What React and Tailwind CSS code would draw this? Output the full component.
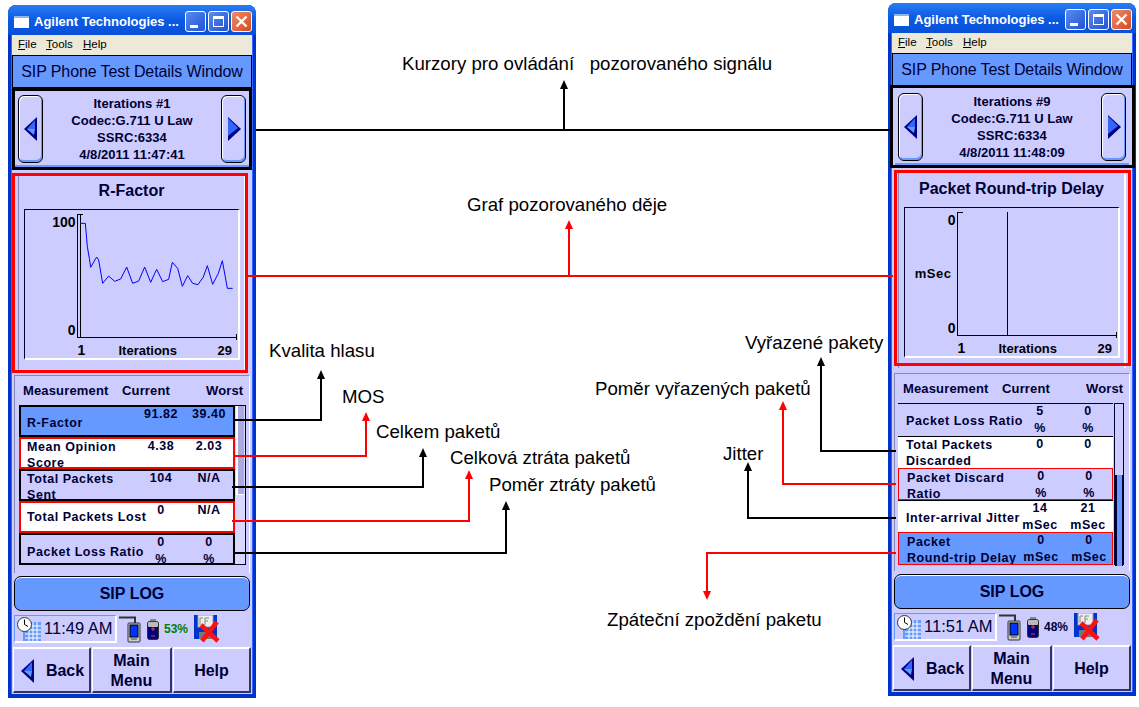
import React from 'react';

const curve = [[30,55],[46,55],[52,125],[58,160],[62,187],[80,156],[86,165],[98,235],[116,213],[134,229],[152,222],[170,186],[188,235],[206,228],[224,186],[242,232],[260,193],[278,230],[296,223],[307,172],[323,190],[337,244],[353,212],[368,235],[384,239],[400,216],[412,182],[428,238],[445,205],[457,167],[472,250],[488,250]]
  .map(([x, y]) => `${x / 3 - 7},${y / 3 - 9}`)
  .join(' ');

const leftRows = [
  { label: ['R-Factor'], cur: ['91.82'], worst: ['39.40'], cls: 'h-[32px] bg-[#6699ff] border-2 border-black', offset: 'pt-[4px]' },
  { label: ['Mean Opinion', 'Score'], cur: ['4.38'], worst: ['2.03'], cls: 'h-[32px] bg-white border-2 border-[#ff0000]' },
  { label: ['Total Packets', 'Sent'], cur: ['104'], worst: ['N/A'], cls: 'h-[32px] bg-[#ccccff] border-2 border-black' },
  { label: ['Total Packets Lost'], cur: ['0'], worst: ['N/A'], cls: 'h-[32px] bg-white border-2 border-[#ff0000]' },
  { label: ['Packet Loss Ratio'], cur: ['0', '%'], worst: ['0', '%'], cls: 'h-[32px] bg-[#ccccff] border-2 border-black' },
];

const rightRows = [
  { label: ['Packet Loss Ratio'], cur: ['5', '%'], worst: ['0', '%'], cls: 'h-[33px] bg-[#ccccff] border-t border-[#000033]' },
  { label: ['Total Packets', 'Discarded'], cur: ['0'], worst: ['0'], cls: 'h-[32px] bg-white border-t border-black' },
  { label: ['Packet Discard', 'Ratio'], cur: ['0', '%'], worst: ['0', '%'], cls: 'h-[32px] bg-[#ccccff] border border-[#ff0000]' },
  { label: ['Inter-arrival Jitter'], cur: ['14', 'mSec'], worst: ['21', 'mSec'], cls: 'h-[32px] bg-white border-t border-black' },
  { label: ['Packet', 'Round-trip Delay'], cur: ['0', 'mSec'], worst: ['0', 'mSec'], cls: 'h-[33px] bg-[#6699ff] border border-[#ff0000]' },
];

function TitleBar() {
  return (
    <div className="h-[30px] shrink-0 flex items-center pt-[3px] pl-[6px] pr-[4px] rounded-t-[8px] bg-linear-to-b from-[#2a7df2] via-[#0a5ae4] to-[#0a50d8]">
      <svg width="15" height="12" viewBox="0 0 15 12" className="shrink-0">
        <rect width="15" height="12" fill="#fff" />
        <rect width="15" height="2" fill="#8fb4ee" />
      </svg>
      <span className="ml-[5px] text-white font-bold text-[13px] whitespace-nowrap">Agilent Technologies ...</span>
      <div className="ml-auto flex gap-[2px]">
        <div className="w-[21px] h-[21px] rounded-[3px] border border-white bg-linear-to-br from-[#5a8cf0] to-[#2350d4] flex items-end pl-[4px] pb-[3px]">
          <div className="w-[8px] h-[3px] bg-white" />
        </div>
        <div className="w-[21px] h-[21px] rounded-[3px] border border-white bg-linear-to-br from-[#5a8cf0] to-[#2350d4] flex items-center justify-center">
          <div className="w-[11px] h-[11px] border border-white border-t-[3px]" />
        </div>
        <div className="w-[21px] h-[21px] rounded-[3px] border border-white bg-linear-to-br from-[#ee8a68] to-[#d4481c] flex items-center justify-center">
          <svg width="13" height="13" viewBox="0 0 13 13">
            <path d="M1.5 1.5 L11.5 11.5 M11.5 1.5 L1.5 11.5" stroke="#fff" strokeWidth="2.4" />
          </svg>
        </div>
      </div>
    </div>
  );
}

function MenuBar() {
  return (
    <div className="h-[20px] shrink-0 bg-[#ece9d8] flex items-center pl-[6px] text-[11.5px] text-black">
      <span className="w-[28px]"><u>F</u>ile</span>
      <span className="w-[37px]"><u>T</u>ools</span>
      <span><u>H</u>elp</span>
    </div>
  );
}

function Arrow({ dir }) {
  return (
    <svg width="14" height="24" viewBox="0 0 14 24" className="shrink-0">
      {dir === 'left' ? (
        <>
          <polygon points="13,0 0,12 13,24" fill="#000080" />
          <polygon points="11,3 3,12 11,12" fill="#3366ff" />
          <polygon points="11,12 3,12 10,18" fill="#6699ff" />
        </>
      ) : (
        <>
          <polygon points="1,0 14,12 1,24" fill="#000080" />
          <polygon points="1,1 11,11 1,19" fill="#3366ff" />
        </>
      )}
    </svg>
  );
}

function NavButton({ dir }) {
  return (
    <div className="w-[25px] h-[68px] shrink-0 rounded-[6px] border border-black bg-[#ccccff] shadow-[inset_1px_1px_0_#fff,inset_-1px_-2px_0_#6699ff] flex items-center justify-center">
      <Arrow dir={dir} />
    </div>
  );
}

function NavPanel({ lines }) {
  return (
    <div className="mt-[3px] mx-[3px] h-[76px] shrink-0 flex items-center pt-[1px] px-[3px] border-b-2 border-[#6699ff]">
      <NavButton dir="left" />
      <div className="flex-1 mt-[1px] text-center font-bold text-[13px] leading-[17px] tracking-[0.05px] text-[#000033]">
        {lines.map((l) => <div key={l}>{l}</div>)}
      </div>
      <NavButton dir="right" />
    </div>
  );
}

function Plot({ kind }) {
  return (
    <svg width="160" height="126" viewBox="0 0 160 126" className="shrink-0">
      <path d="M0 .5 H6 M159.5 120 V126 M0 123.5 H160" stroke="#000" fill="none" />
      <path d="M.5 0 V124" stroke="#000" fill="none" />
      {kind === 'curve' ? (
        <>
          <path d="M3.5 0 V124" stroke="#000" fill="none" />
          <polyline points={curve} fill="none" stroke="#0000ff" strokeWidth="1" />
        </>
      ) : (
        <path d="M50.5 0 V124" stroke="#000" fill="none" />
      )}
    </svg>
  );
}

function ChartPanel({ title, top, mid, kind }) {
  return (
    <div className="mt-[7px] mx-[6px] h-[196px] shrink-0 flex flex-col items-center border-l border-t border-[#8888bb] border-r-2 border-r-white">
      <div className="h-[34px] pb-[2px] w-full flex items-center justify-center font-bold text-[16px] text-[#000033]">{title}</div>
      <div className="w-[216px] h-[151px] border-t border-l border-[#000033] border-r-2 border-r-white border-b-2 border-b-white flex flex-col">
        <div className="flex pt-[4px]">
          <div className="w-[52px] h-[124px] pr-[1px] flex flex-col items-end justify-between font-bold text-[14px] leading-[16px]">
            <span>{top}</span>
            {mid && <span className="text-[13px] tracking-[0.5px] pr-[4px]">{mid}</span>}
            <span>0</span>
          </div>
          <Plot kind={kind} />
        </div>
        <div className="flex-1 flex items-center font-bold text-[13px]">
          <span className="ml-[53px] w-[41px] text-[14px]">1</span>
          <span className="w-[99px]">Iterations</span>
          <span>29</span>
        </div>
      </div>
    </div>
  );
}

function Row({ row, cols, pad }) {
  return (
    <div className={`shrink-0 grid font-bold text-[12.5px] leading-[16px] tracking-[0.55px] text-[#000033] overflow-hidden ${cols} ${row.cls}`}>
      <div className={`flex flex-col justify-center whitespace-nowrap ${pad} ${row.offset || ''}`}>
        {row.label.map((l) => <div key={l}>{l}</div>)}
      </div>
      <div className="text-center -mt-[1px] leading-[17px]">{row.cur.map((v) => <div key={v}>{v}</div>)}</div>
      <div className="text-center -mt-[1px] leading-[17px]">{row.worst.map((v) => <div key={v}>{v}</div>)}</div>
    </div>
  );
}

function ListPanel({ rows, side }) {
  const isLeft = side === 'left';
  return (
    <div className="mt-[5px] mx-[2px] h-[198px] shrink-0 flex flex-col border-t border-l border-[#8888bb] border-r border-r-white">
      <div className="h-[29px] shrink-0 flex items-center font-bold text-[13px] tracking-[0.15px] text-[#000033]">
        <span className="ml-[8px] w-[99px]">Measurement</span>
        <span className="w-[84px]">Current</span>
        <span>Worst</span>
      </div>
      <div className={`flex ${isLeft ? 'pl-[4px]' : 'pl-[3px]'}`}>
        <div className={`flex flex-col ${isLeft ? 'w-[216px]' : 'w-[215px]'}`}>
          {rows.map((r) => (
            <Row
              key={r.label.join()}
              row={r}
              cols={isLeft ? 'grid-cols-[116px_48px_48px]' : 'grid-cols-[118px_48px_48px]'}
              pad={isLeft ? 'pl-[6px]' : 'pl-[8px]'}
            />
          ))}
        </div>
        {isLeft ? (
          <div className="w-[11px] h-[160px] border-t border-r border-[#000033] bg-[#d8d8ff] border-b">
            <div className="h-[89px] mx-[1px] border-l-2 border-white bg-[#aaaadd] border-b border-[#000033]" />
          </div>
        ) : (
          <div className="w-[10px] ml-[1px] h-[162px] border-t border-x border-[#000033] bg-[#ccccff]">
            <div className="h-[71px]" />
            <div className="h-[91px] border-l-2 border-[#000033] bg-[#6699ff] border-r" />
          </div>
        )}
      </div>
    </div>
  );
}

function Clock() {
  return (
    <svg width="24" height="24" viewBox="0 0 24 24" className="shrink-0">
      <rect x="6" y="5" width="18" height="19" fill="#6699ff" />
      <path d="M8 9 H24 M8 13 H24 M8 17 H24 M8 21 H24 M12 5 V24 M16 5 V24 M20 5 V24" stroke="#fff" />
      <circle cx="7.5" cy="7.5" r="7" fill="#fff" stroke="#333" />
      <path d="M7.5 7.5 V2.5 M7.5 7.5 L11 9.5" stroke="#000" />
    </svg>
  );
}

function Handheld() {
  return (
    <svg width="22" height="27" viewBox="0 0 22 27" className="shrink-0">
      <path d="M0 1.5 H16 V7" stroke="#333" strokeWidth="2" fill="none" />
      <rect x="9" y="7" width="12" height="19" rx="1" fill="#cccccc" stroke="#333" />
      <rect x="11" y="9" width="8" height="12" fill="#0033ff" stroke="#000" />
      <rect x="12" y="22" width="6" height="2" fill="#888" />
    </svg>
  );
}

function Battery() {
  return (
    <svg width="12" height="21" viewBox="0 0 12 21" className="shrink-0">
      <rect x="3" y="0" width="6" height="3" fill="#888" />
      <rect x="0.5" y="2.5" width="11" height="18" rx="2" fill="#000080" stroke="#333" />
      <rect x="1" y="3" width="10" height="5" rx="1" fill="#bbb" />
      <path d="M4 10 H8 M6 8 V12" stroke="#ff3333" />
      <path d="M4 17 H8" stroke="#ff3333" />
    </svg>
  );
}

function Disk() {
  return (
    <svg width="26" height="28" viewBox="0 0 26 28" className="shrink-0">
      <rect x="0" y="0" width="23" height="24" fill="#0033cc" />
      <rect x="4" y="0" width="15" height="12" fill="#eeeeee" stroke="#999" />
      <rect x="5" y="17" width="13" height="7" fill="#777" />
      <path d="M6 10 V3 H9 M11 10 V3 H15 M11 6 H14" stroke="#888" fill="none" />
      <path d="M7 10 L24 26 M23 7 L8 26" stroke="#ff1111" strokeWidth="4.5" />
    </svg>
  );
}

function Status({ time, pct, pctColor }) {
  return (
    <div className="mt-[4px] ml-[2px] h-[28px] shrink-0 flex items-center">
      <div className="w-[103px] h-[28px] flex items-center pl-[2px] gap-[3px] border-t border-l border-[#6699ff] border-r-2 border-b-2 border-r-white border-b-white text-[16.5px] text-[#000033]">
        <Clock />
        <span className="whitespace-nowrap">{time}</span>
      </div>
      <div className="ml-[2px]"><Handheld /></div>
      <div className="ml-[6px]"><Battery /></div>
      <span className={`ml-[5px] w-[30px] font-bold text-[12px] ${pctColor}`}>{pct}</span>
      <Disk />
    </div>
  );
}

function BottomButton({ children, cls }) {
  return (
    <div className={`h-[46px] pt-[1px] flex items-center justify-center text-center font-bold text-[16px] leading-[20px] text-[#000033] border-t-2 border-l border-white border-r-2 border-r-[#333366] border-b-2 border-b-[#333366] ${cls}`}>
      {children}
    </div>
  );
}

function Window({ iter, time, clock, pct, pctColor, chart, rows, side, cls }) {
  return (
    <div className={`w-[248px] h-[693px] shrink-0 flex flex-col rounded-t-[8px] border-x-[3px] border-b-[4px] border-[#0033cc] bg-[#0033cc] ${cls}`}>
      <div className="-mx-[3px]"><TitleBar /></div>
      <div className="flex-1 flex flex-col bg-[#ccccff] border-x border-[#3366ff]">
        <MenuBar />
        <div className="h-[33px] shrink-0 border border-black bg-[#6699ff] flex items-center justify-center text-[16px] tracking-[-0.1px] text-[#000033] whitespace-nowrap">
          SIP Phone Test Details Window
        </div>
        <NavPanel lines={[`Iterations #${iter}`, 'Codec:G.711 U Law', 'SSRC:6334', time]} />
        <ChartPanel {...chart} />
        <ListPanel rows={rows} side={side} />
        <div className="mt-[3px] mx-[2px] h-[35px] shrink-0 rounded-[7px] border border-black bg-[#6699ff] shadow-[inset_0_1px_0_#fff] flex items-center justify-center font-bold text-[16px] text-[#000033]">
          SIP LOG
        </div>
        <Status time={clock} pct={pct} pctColor={pctColor} />
        <div className="mt-[4px] ml-[1px] mr-[1px] grid grid-cols-[78px_80px_78px] gap-[1px]">
          <BottomButton cls="gap-[11px] pl-[2px]">
            <Arrow dir="left" />
            <span>Back</span>
          </BottomButton>
          <BottomButton><span>Main<br />Menu</span></BottomButton>
          <BottomButton>Help</BottomButton>
        </div>
      </div>
    </div>
  );
}

function Connectors() {
  const black = 'M256 130 H890 M564 130 V86 M233 420 H321 V376 M232 487 H423 V454 M233 553 H506 V507 M896 451 H821 V363 M896 518 H748 V468';
  const red = 'M248 276 H893 M569 276 V226 M233 456 H366 V418 M232 521 H469 V476 M896 484 H783 V407 M896 553 H707 V594';
  const up = [[564, 80], [321, 370], [423, 448], [506, 501], [821, 357], [748, 462]];
  const upRed = [[569, 220], [366, 412], [469, 470], [783, 401]];
  return (
    <svg width="1139" height="707" viewBox="0 0 1139 707" className="absolute inset-0">
      <path d={black} stroke="#000" strokeWidth="2" fill="none" />
      <path d={red} stroke="#ff0000" strokeWidth="2" fill="none" />
      {up.map(([x, y]) => <polygon key={x} points={`${x},${y} ${x + 4},${y + 9} ${x - 4},${y + 9}`} fill="#000" />)}
      {upRed.map(([x, y]) => <polygon key={x} points={`${x},${y} ${x + 4},${y + 9} ${x - 4},${y + 9}`} fill="#ff0000" />)}
      <polygon points="707,600 703,591 711,591" fill="#ff0000" />
    </svg>
  );
}

function Label({ cls, children }) {
  return <div className={`absolute text-[18.67px] leading-[20px] text-black whitespace-pre ${cls}`}>{children}</div>;
}

export default function App() {
  return (
    <div className="relative w-[1139px] h-[707px] overflow-hidden bg-white flex justify-between items-start pl-[8px] pr-[3px] font-['Liberation_Sans',Arial,sans-serif]">
      <Window
        iter="1"
        time="4/8/2011 11:47:41"
        clock="11:49 AM"
        pct="53%"
        pctColor="text-[#008000]"
        chart={{ title: 'R-Factor', top: '100', kind: 'curve' }}
        rows={leftRows}
        side="left"
        cls="mt-[5px]"
      />
      <Window
        iter="9"
        time="4/8/2011 11:48:09"
        clock="11:51 AM"
        pct="48%"
        pctColor="text-[#000033]"
        chart={{ title: 'Packet Round-trip Delay', top: '0', mid: 'mSec', kind: 'line' }}
        rows={rightRows}
        side="right"
        cls="mt-[3px]"
      />

      {/* annotations drawn over the two windows */}
      <Connectors />
      <div className="absolute left-[12px] top-[88px] w-[240px] h-[82px] border-[3px] border-black" />
      <div className="absolute left-[12px] top-[173px] w-[236px] h-[200px] border-[3px] border-[#ff0000]" />
      <div className="absolute left-[890px] top-[85px] w-[245px] h-[83px] border-[3px] border-black" />
      <div className="absolute left-[894px] top-[170px] w-[237px] h-[196px] border-[3px] border-[#ff0000]" />

      <Label cls="left-[402px] top-[54px]">{'Kurzory pro ovládání   pozorovaného signálu'}</Label>
      <Label cls="left-[467px] top-[195px]">Graf pozorovaného děje</Label>
      <Label cls="left-[269px] top-[341px]">Kvalita hlasu</Label>
      <Label cls="left-[342px] top-[387px]">MOS</Label>
      <Label cls="left-[376px] top-[422px]">Celkem paketů</Label>
      <Label cls="left-[450px] top-[448px]">Celková ztráta paketů</Label>
      <Label cls="left-[489px] top-[475px]">Poměr ztráty paketů</Label>
      <Label cls="left-[745px] top-[333px]">Vyřazené pakety</Label>
      <Label cls="left-[595px] top-[379px]">Poměr vyřazených paketů</Label>
      <Label cls="left-[723px] top-[444px]">Jitter</Label>
      <Label cls="left-[607px] top-[610px]">Zpáteční zpoždění paketu</Label>
    </div>
  );
}
